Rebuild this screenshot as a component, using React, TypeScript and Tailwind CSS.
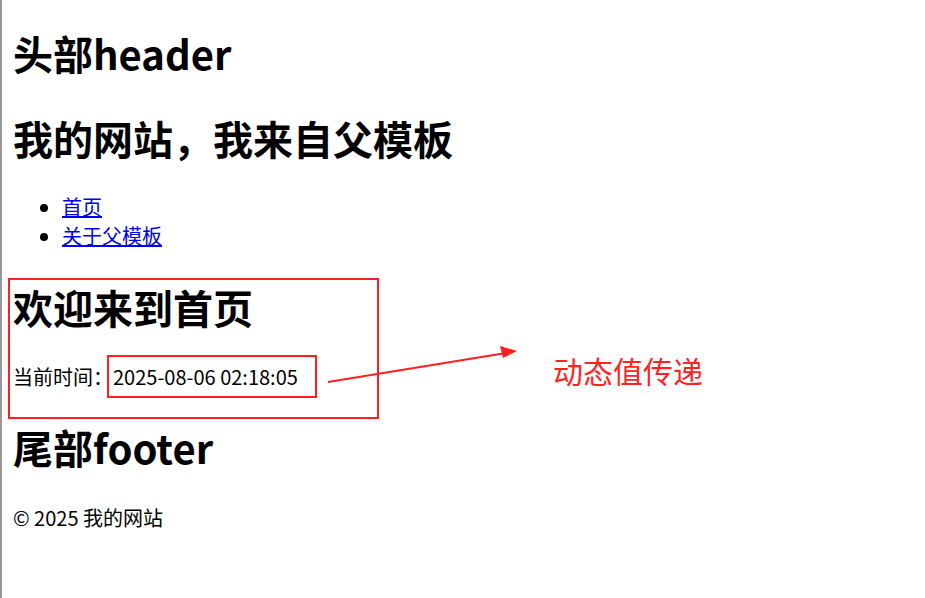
import React from 'react';

const font = { fontFamily: '"Noto Sans CJK SC", "Noto Sans", sans-serif' };

const links = ['首页', '关于父模板'];

export default function App() {
  return (
    <div className="relative h-[598px] w-full overflow-hidden bg-white" style={font}>
      {/* page body */}
      <div className="flex h-full flex-col border-l-2 border-[#9a9a9a] pl-[11px] text-black">
        <h1 className="mt-[24px] text-[40px] font-bold leading-[58px]">头部header</h1>
        <h1 className="mt-[27px] text-[40px] font-bold leading-[58px]">我的网站，我来自父模板</h1>
        <ul className="mt-[25px] list-disc pl-[49px] text-[20px] leading-[29px]">
          {links.map((l) => (
            <li key={l}>
              <a href="#" className="text-[#0000ee] underline">
                {l}
              </a>
            </li>
          ))}
        </ul>
        <h1 className="mt-[28px] text-[40px] font-bold leading-[58px]">欢迎来到首页</h1>
        <p className="mt-[26px] text-[20px] leading-[29px]">
          当前时间：<span>2025-08-06 02:18:05</span>
        </p>
        <h1 className="mt-[27px] text-[40px] font-bold leading-[58px]">尾部footer</h1>
        <p className="mt-[27px] text-[20px] leading-[29px]">© 2025 我的网站</p>
      </div>

      {/* red markup on top of the page */}
      <div className="absolute left-[8px] top-[278px] h-[141px] w-[371px] border-2 border-[#ff1f1f]" />
      <div className="absolute left-[107px] top-[355px] h-[43px] w-[210px] border-2 border-[#ff1f1f]" />
      <svg className="absolute left-0 top-0" width="925" height="598">
        <line x1="328" y1="382" x2="506" y2="353" stroke="#ff1f1f" strokeWidth="2" />
        <polygon points="517,351 500,346 503,358" fill="#ff1f1f" />
      </svg>
      <div className="absolute left-[553px] top-[349px] text-[30px] leading-[42px] text-[#ff2424]">
        动态值传递
      </div>
    </div>
  );
}
